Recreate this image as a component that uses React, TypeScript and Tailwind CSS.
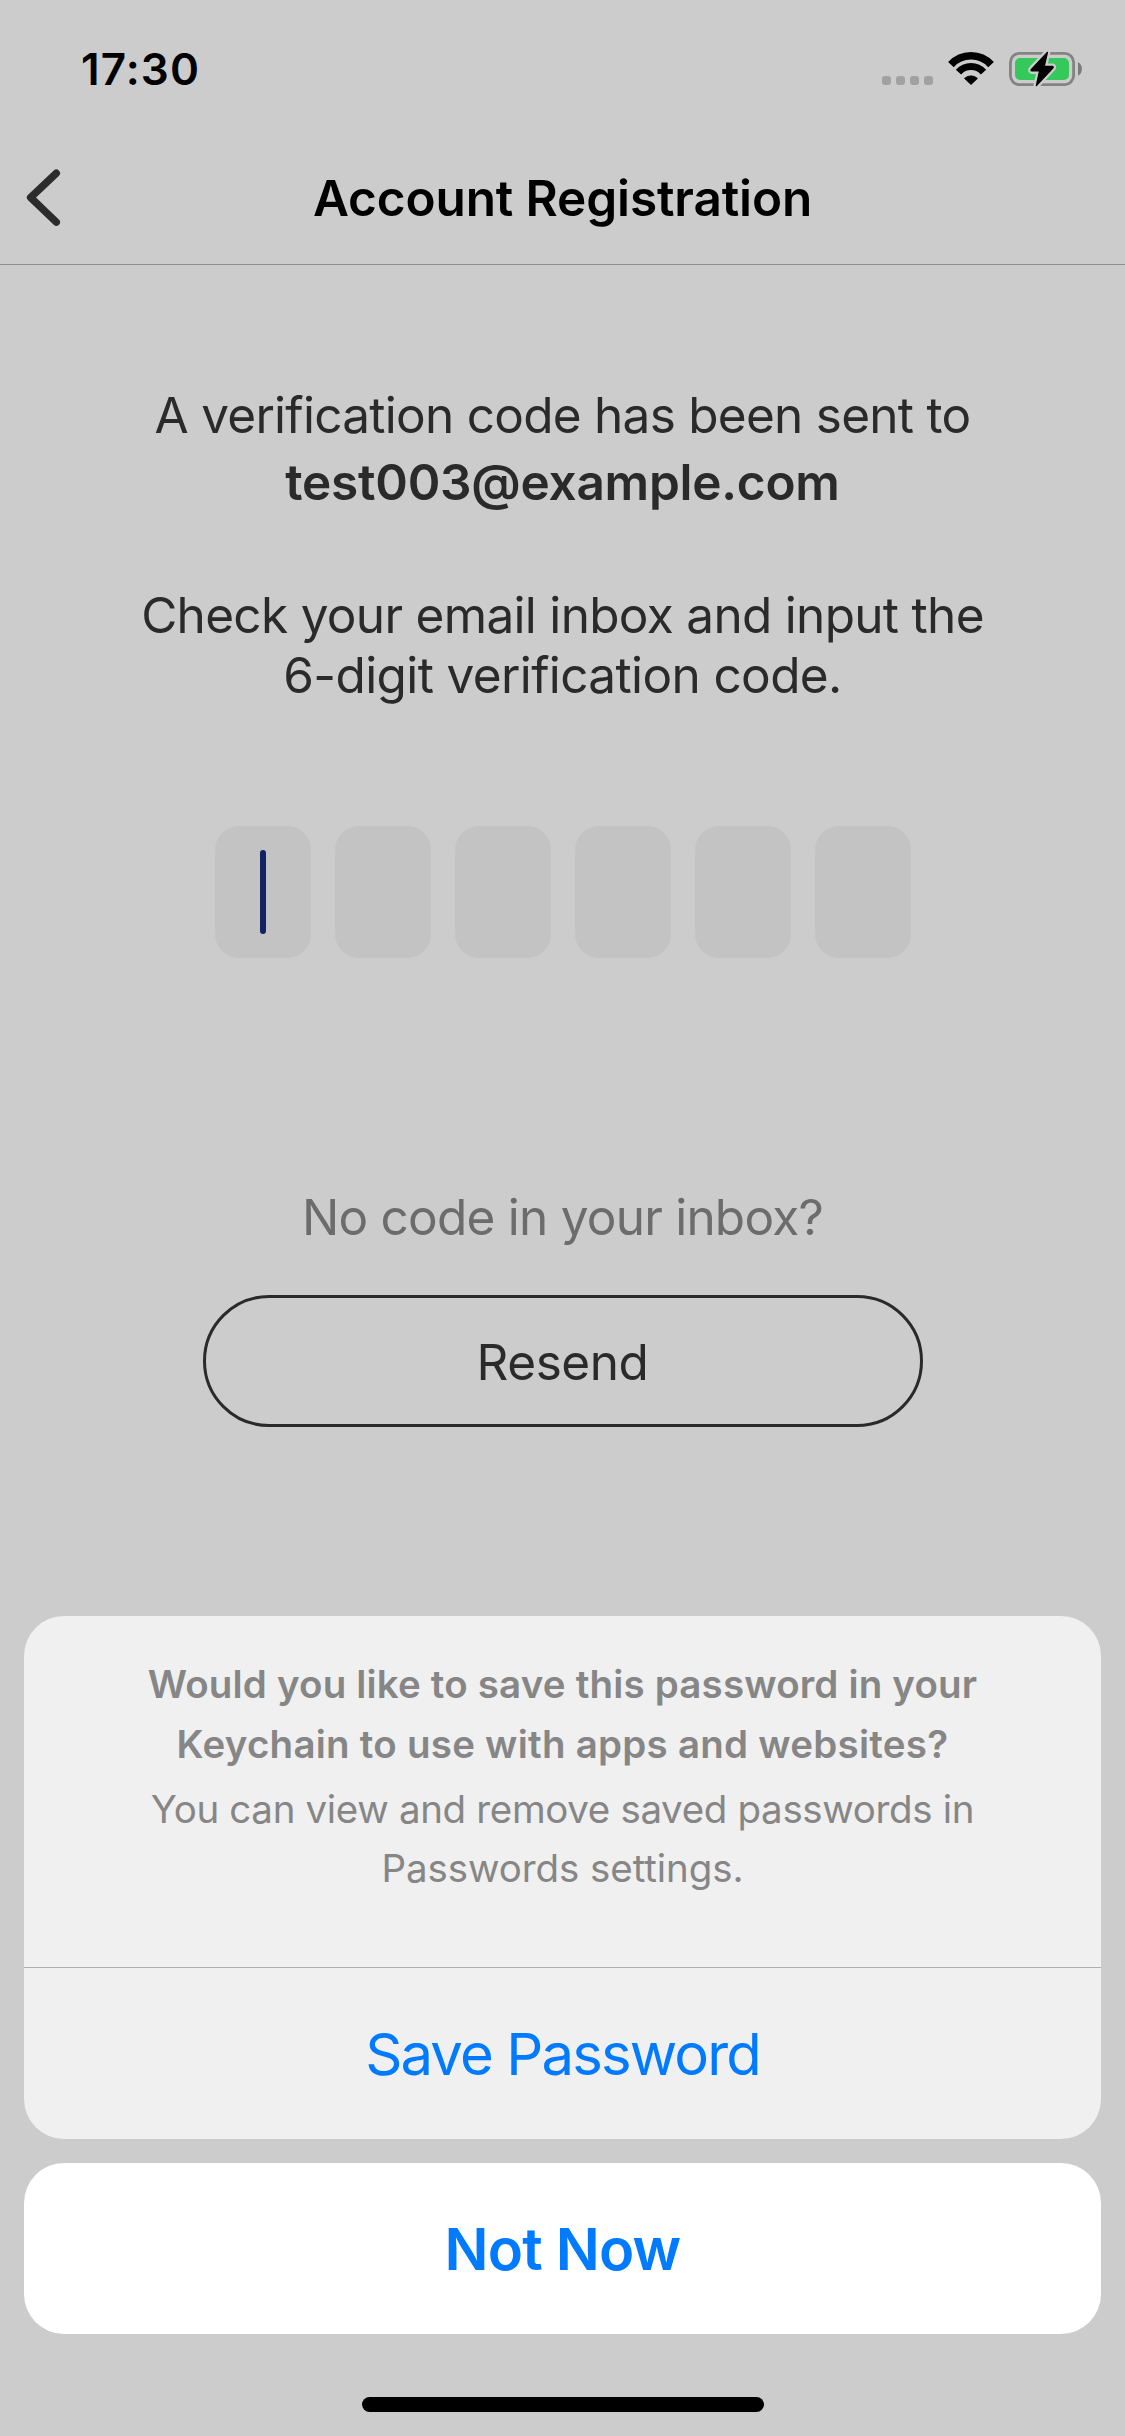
function StatusBar() {
  return (
    <div className="flex h-[132px] items-start justify-between pl-[81px] pr-[40px]">
      <span className="mt-[42px] text-[44px] font-semibold leading-[54px] tracking-[1.12px] text-black">17:30</span>
      <div className="mt-[46px] flex items-start">
        <div className="mr-[13px] mt-[30px] flex gap-[5px]">
          {[0, 1, 2, 3].map((i) => (
            <span key={i} className="size-[9px] rounded-[3px] bg-[#a1a1a1]" />
          ))}
        </div>
        <svg className="mr-[9px] mt-[4px]" width="50" height="38" viewBox="0 0 50 38" fill="none">
          <path d="M4.95 14.6A27.2 27.2 0 0 1 45.05 14.6" stroke="#000" strokeWidth="7.6" />
          <path d="M12.5 22.1A16.6 16.6 0 0 1 37.5 22.1" stroke="#000" strokeWidth="7" />
          <path d="M18.6 28.4A9.5 9.5 0 0 1 31.4 28.4L25 34.4Z" fill="#000" stroke="#000" strokeWidth="1" strokeLinejoin="round" />
        </svg>
        <svg width="80" height="46" viewBox="0 0 80 46" fill="none">
          <rect x="5.4" y="7.4" width="63.2" height="31.2" rx="9" stroke="#838383" strokeWidth="2.8" />
          <rect x="10" y="12" width="54" height="22" rx="5" fill="#34c95a" />
          <path d="M73 16.3C78.2 18.4 78.2 27.6 73 29.7Z" fill="#7a7a7a" />
          <path
            d="M42.4 6.4L26.4 23.4Q25.4 24.7 27 24.9H34.6L31.4 39.6L47.8 22Q48.8 20.7 47.2 20.4H39.2Z"
            fill="#ccc"
            stroke="#ccc"
            strokeWidth="6"
            strokeLinejoin="round"
          />
          <path
            d="M42.4 6.4L26.4 23.4Q25.4 24.7 27 24.9H34.6L31.4 39.6L47.8 22Q48.8 20.7 47.2 20.4H39.2Z"
            fill="#000"
            stroke="#000"
            strokeWidth="1.4"
            strokeLinejoin="round"
          />
        </svg>
      </div>
    </div>
  );
}

function NavBar() {
  return (
    <header className="grid h-[133px] grid-cols-[120px_1fr_120px] items-center border-b border-[#8f8f8f]">
      <button className="pl-[24px]" aria-label="Back">
        <svg width="40" height="60" viewBox="0 0 40 60" fill="none">
          <path d="M32.3 5.2L6.6 29.5L32.3 54.2" stroke="#2c2c2c" strokeWidth="7.4" strokeLinecap="round" strokeLinejoin="round" />
        </svg>
      </button>
      <h1 className="text-center text-[49.5px] font-semibold leading-[60px] tracking-[-0.12px] text-black">Account Registration</h1>
    </header>
  );
}

function CodeInput() {
  return (
    <div className="mt-[121px] flex gap-[24px]">
      {[0, 1, 2, 3, 4, 5].map((i) => (
        <div key={i} className="flex h-[132px] w-[96px] items-center justify-center rounded-[24px] bg-[#c3c3c3]">
          {i === 0 && <span className="h-[84px] w-[6px] rounded-full bg-[#122464]" />}
        </div>
      ))}
    </div>
  );
}

function ActionSheet() {
  return (
    <div className="absolute inset-x-[24px] bottom-[102px] flex flex-col gap-[24px] text-center">
      <div className="overflow-hidden rounded-[40px] bg-[#f0f0f0]">
        <div className="h-[351px] pt-[38px] text-[38.5px] leading-[60px] text-[#868686]">
          <p className="font-semibold tracking-[0.18px]">Would you like to save this password in your</p>
          <p className="font-semibold tracking-[0.25px]">Keychain to use with apps and websites?</p>
          <p className="mt-[5px] tracking-[-0.34px]">You can view and remove saved passwords in</p>
          <p className="-mt-px tracking-[-0.08px]">Passwords settings.</p>
        </div>
        <button className="block h-[172px] w-full border-t border-[#b0b0b2] text-[58px] leading-[70px] tracking-[-1.87px] text-[#007aff]">
          Save Password
        </button>
      </div>
      <button className="h-[171px] rounded-[40px] bg-white text-[58px] font-semibold leading-[70px] tracking-[-0.82px] text-[#007aff]">
        Not Now
      </button>
    </div>
  );
}

export default function App() {
  return (
    <div className="relative h-[2436px] w-[1125px] overflow-hidden bg-[#ccc] font-['Inter',sans-serif]">
      <StatusBar />
      <NavBar />
      <main className="flex flex-col items-center pt-[120px] text-center text-[49.5px] leading-[60px] text-[#2a2a2a]">
        <p className="tracking-[-0.73px]">A verification code has been sent to</p>
        <p className="mt-[7px] font-semibold tracking-[-0.24px]">test003@example.com</p>
        <p className="mt-[73px] tracking-[-0.69px]">Check your email inbox and input the</p>
        <p className="tracking-[-0.62px]">6-digit verification code.</p>
        <CodeInput />
        <p className="mt-[229px] tracking-[-0.77px] text-[#6c6c6c]">No code in your inbox?</p>
        <button className="mt-[48px] h-[132px] w-[720px] rounded-full border-[3px] border-[#2a2a2a] pt-[2px] leading-[60px] tracking-[-0.44px]">
          Resend
        </button>
      </main>
      <ActionSheet />
      <div className="absolute bottom-[24px] left-1/2 h-[15px] w-[402px] -translate-x-1/2 rounded-full bg-black" />
    </div>
  );
}
